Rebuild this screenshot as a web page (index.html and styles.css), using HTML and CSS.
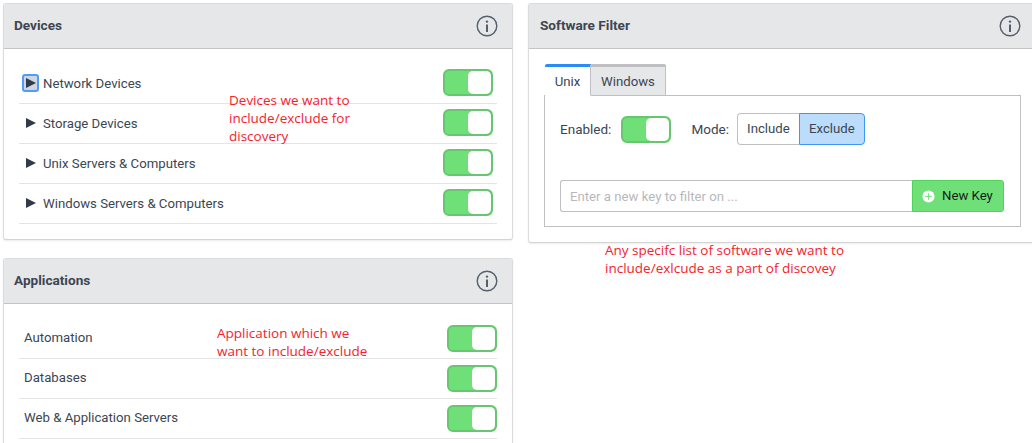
FILE: index.html
```html
<!DOCTYPE html>
<html lang="en">
<head>
<meta charset="utf-8">
<title>Discovery filters</title>
<link rel="stylesheet" href="styles.css">
</head>
<body>
<div class="page">
  <div class="col-left">
    <section class="card">
      <header class="card-head">
        <h2>Devices</h2>
        <svg class="info" viewBox="0 0 22 22"><circle cx="11" cy="11" r="9.8"/><circle class="dot" cx="11" cy="6.6" r="1.2"/><rect class="dot" x="10" y="9.5" width="2" height="7.5"/></svg>
      </header>
      <div class="list list-devices">
        <div class="row">
          <span class="arrow focus"><svg viewBox="0 0 10 10"><path d="M0 0L10 5L0 10Z"/></svg></span>
          <span class="row-label">Network Devices</span>
          <span class="toggle"><span class="knob"></span></span>
        </div>
        <div class="row">
          <span class="arrow"><svg viewBox="0 0 10 10"><path d="M0 0L10 5L0 10Z"/></svg></span>
          <span class="row-label">Storage Devices</span>
          <span class="toggle"><span class="knob"></span></span>
        </div>
        <div class="row">
          <span class="arrow"><svg viewBox="0 0 10 10"><path d="M0 0L10 5L0 10Z"/></svg></span>
          <span class="row-label">Unix Servers &amp; Computers</span>
          <span class="toggle"><span class="knob"></span></span>
        </div>
        <div class="row">
          <span class="arrow"><svg viewBox="0 0 10 10"><path d="M0 0L10 5L0 10Z"/></svg></span>
          <span class="row-label">Windows Servers &amp; Computers</span>
          <span class="toggle"><span class="knob"></span></span>
        </div>
      </div>
    </section>
    <section class="card">
      <header class="card-head">
        <h2>Applications</h2>
        <svg class="info" viewBox="0 0 22 22"><circle cx="11" cy="11" r="9.8"/><circle class="dot" cx="11" cy="6.6" r="1.2"/><rect class="dot" x="10" y="9.5" width="2" height="7.5"/></svg>
      </header>
      <div class="list list-apps">
        <div class="row"><span class="row-label">Automation</span><span class="toggle"><span class="knob"></span></span></div>
        <div class="row"><span class="row-label">Databases</span><span class="toggle"><span class="knob"></span></span></div>
        <div class="row"><span class="row-label">Web &amp; Application Servers</span><span class="toggle"><span class="knob"></span></span></div>
      </div>
    </section>
  </div>
  <div class="col-right">
    <section class="card card-software">
      <header class="card-head">
        <h2>Software Filter</h2>
        <svg class="info" viewBox="0 0 22 22"><circle cx="11" cy="11" r="9.8"/><circle class="dot" cx="11" cy="6.6" r="1.2"/><rect class="dot" x="10" y="9.5" width="2" height="7.5"/></svg>
      </header>
      <div class="tabs-wrap">
        <div class="tabs">
          <span class="tab tab-active">Unix</span>
          <span class="tab">Windows</span>
        </div>
        <div class="tab-panel">
          <div class="controls">
            <span class="ctl-label">Enabled:</span>
            <span class="toggle"><span class="knob"></span></span>
            <span class="ctl-label mode-label">Mode:</span>
            <div class="segment">
              <span class="seg">Include</span>
              <span class="seg seg-on">Exclude</span>
            </div>
          </div>
          <div class="key-row">
            <span class="key-input">Enter a new key to filter on ...</span>
            <span class="key-btn">
              <svg class="plus" viewBox="0 0 14 14"><circle cx="7" cy="7" r="6.5"/><path d="M7 3.5V10.5M3.5 7H10.5"/></svg>
              New Key
            </span>
          </div>
        </div>
      </div>
    </section>
  </div>
  <p class="note note-devices">Devices we want to<br>include/exclude for<br>discovery</p>
  <p class="note note-apps">Application which we<br>want to include/exclude</p>
  <p class="note note-software">Any specifc list of software we want to<br>include/exlcude as a part of discovey</p>
</div>
</body>
</html>
```

FILE: styles.css
```css
html, body {
  margin: 0;
  padding: 0;
  background: #fff;
  overflow: hidden;
}
body {
  width: 1032px;
  height: 443px;
  font-family: Roboto, "Liberation Sans", sans-serif;
  font-size: 13.2px;
  color: #3b4654;
}
.page {
  position: relative;
  display: flex;
  gap: 15px;
  width: 1033px;
  padding: 3px 0 0 3px;
  box-sizing: border-box;
}
.col-left {
  flex: none;
  width: 510px;
  display: flex;
  flex-direction: column;
  gap: 18px;
}
.col-right {
  flex: none;
  width: 508px;
}
.card {
  background: #fff;
  border: 1px solid #dcdcdc;
  border-bottom-color: #d4d4d4;
  border-radius: 3px;
  box-shadow: 0 1px 2px rgba(0, 0, 0, 0.08);
}
.card-head {
  display: flex;
  align-items: center;
  justify-content: space-between;
  box-sizing: border-box;
  height: 45px;
  padding: 0 14px 2px 10px;
  background: #e6e7e9;
  border-bottom: 1px solid #c3c4c8;
  border-radius: 2px 2px 0 0;
}
.card-head h2 {
  margin: 0;
  font-size: 13.6px;
  font-weight: 700;
  color: #3d4651;
}
.info {
  width: 22px;
  height: 22px;
  margin-top: 2px;
  fill: none;
  stroke: #56606b;
  stroke-width: 1.4;
}
.info .dot {
  fill: #56606b;
  stroke: none;
}
.card-software .card-head {
  padding-left: 11px;
}
.list {
  padding: 15px 15px 15px;
}
.row {
  display: flex;
  align-items: center;
  height: 39px;
  border-bottom: 1px solid #e5e5e5;
  color: #3b4654;
}
.row .toggle {
  margin-top: -2px;
}
.row-label {
  flex: 1;
  margin-top: -1px;
}
.list-devices .row {
  padding-right: 4px;
}
.list-apps .row {
  padding-left: 5px;
}
.list-apps .row .toggle {
  margin-top: 0;
}
.list-apps .row-label {
  margin-top: -3px;
}
.arrow {
  display: flex;
  align-items: center;
  justify-content: center;
  box-sizing: border-box;
  width: 17px;
  height: 18px;
  margin: -1px 4px 0 3px;
}
.arrow svg {
  width: 10px;
  height: 10px;
  fill: #303c4c;
}
.arrow.focus {
  background: #cfd6df;
  border: 2px solid #4f9dfb;
  border-radius: 3px;
}
.toggle {
  display: block;
  flex: none;
  position: relative;
  box-sizing: border-box;
  width: 50px;
  height: 27px;
  background: #6fe078;
  border: 2px solid #67c670;
  border-radius: 6px;
}
.knob {
  position: absolute;
  top: 0;
  right: 0;
  width: 23px;
  height: 23px;
  background: #fff;
  border-radius: 5px;
}
.card-software {
  height: 238px;
}
.tabs-wrap {
  padding: 15px 15px 0;
}
.tabs {
  display: flex;
  height: 32px;
  padding-left: 1px;
}
.tab {
  display: flex;
  align-items: center;
  justify-content: center;
  box-sizing: border-box;
  width: 75px;
  height: 32px;
  padding-top: 1px;
  background: #e6e7e9;
  border: 1px solid #c0c0c4;
  border-top: 3px solid #c0c0c4;
  border-left: 0;
  border-radius: 0 2px 0 0;
  color: #3b4654;
}
.tab-active {
  position: relative;
  z-index: 1;
  width: 46px;
  background: #fff;
  border-top-color: #2b8cf5;
  border-bottom-color: #fff;
  border-radius: 2px 0 0 0;
}
.tab-panel {
  box-sizing: border-box;
  width: 477px;
  height: 132px;
  margin-top: -1px;
  padding: 17px 16px 0 15px;
  border: 1px solid #c0c0c4;
}
.controls {
  display: flex;
  align-items: center;
  height: 32px;
}
.ctl-label {
  margin-right: 10px;
  font-size: 13.5px;
}
.mode-label {
  margin-left: 20px;
  margin-right: 8px;
}
.segment {
  display: flex;
  height: 32px;
}
.seg {
  display: flex;
  align-items: center;
  justify-content: center;
  box-sizing: border-box;
  width: 62px;
  padding-bottom: 1px;
  border: 1px solid #c0c0c4;
  border-right: 0;
  border-radius: 4px 0 0 4px;
}
.seg-on {
  width: 66px;
  background: #bcdcfb;
  border: 1px solid #3f95f6;
  border-radius: 0 4px 4px 0;
}
.key-row {
  display: flex;
  height: 32px;
  margin-top: 35px;
}
.key-input {
  flex: 1;
  display: flex;
  align-items: center;
  box-sizing: border-box;
  padding: 0 9px;
  border: 1px solid #c0c0c4;
  border-right: 0;
  border-radius: 3px 0 0 3px;
  font-size: 13.2px;
  color: #b8b8bc;
}
.key-btn {
  display: flex;
  align-items: center;
  gap: 7px;
  box-sizing: border-box;
  width: 92px;
  padding-left: 9px;
  padding-bottom: 1px;
  background: #6fe078;
  border: 1px solid #4fd45a;
  border-radius: 0 3px 3px 0;
  color: #18201c;
}
.plus {
  width: 13px;
  height: 13px;
  margin-top: 1px;
  fill: #fff;
  stroke: none;
}
.plus path {
  fill: none;
  stroke: #6fe078;
  stroke-width: 1;
}
.note {
  position: absolute;
  margin: 0;
  font-family: "Open Sans", sans-serif;
  font-size: 13.5px;
  line-height: 18px;
  color: #f5222d;
}
.note-devices {
  left: 229px;
  top: 91px;
}
.note-apps {
  left: 217px;
  top: 324px;
}
.note-software {
  left: 605px;
  top: 241px;
}
```
